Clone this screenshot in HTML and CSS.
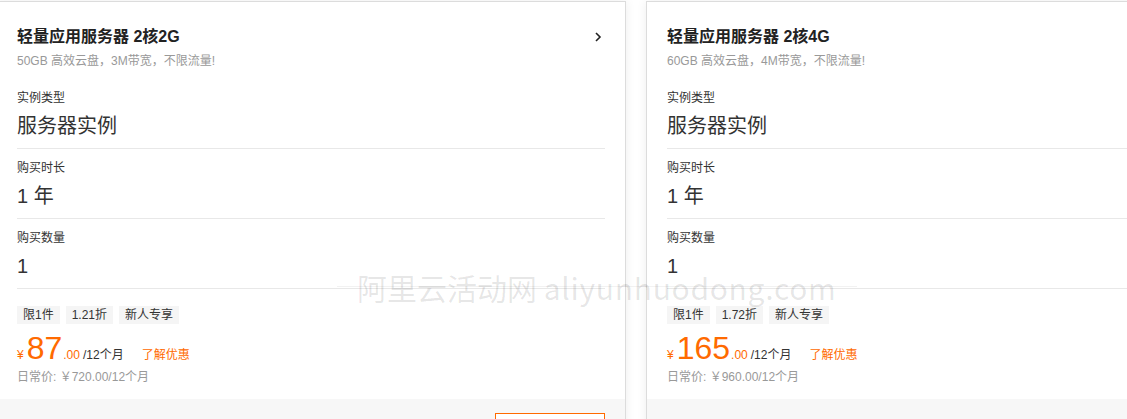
FILE: index.html
```html
<!DOCTYPE html>
<html lang="zh-CN">
<head>
  <meta charset="UTF-8">
  <title>轻量应用服务器</title>
  <link rel="stylesheet" href="styles.css">
</head>
<body>
  <div class="cards">
    <div class="card">
      <div class="card-body">
        <div class="card-head">
          <div class="title-row">
            <h3>轻量应用服务器 2核2G</h3>
            <svg class="chevron" width="8" height="12" viewBox="0 0 8 12"><path d="M2 2 L6 6 L2 10" fill="none" stroke="#222" stroke-width="1.6"/></svg>
          </div>
          <p class="sub">50GB 高效云盘，3M带宽，不限流量!</p>
        </div>
        <div class="field">
          <div class="label">实例类型</div>
          <div class="value">服务器实例</div>
        </div>
        <div class="field">
          <div class="label">购买时长</div>
          <div class="value">1 年</div>
        </div>
        <div class="field">
          <div class="label">购买数量</div>
          <div class="value">1</div>
        </div>
        <div class="tags">
          <span class="tag">限1件</span>
          <span class="tag">1.21折</span>
          <span class="tag">新人专享</span>
        </div>
        <div class="price-row">
          <span class="yen">¥</span>
          <span class="amount">87</span>
          <span class="cents">.00</span>
          <span class="unit">/12个月</span>
          <a class="more" href="#">了解优惠</a>
        </div>
        <div class="orig">日常价: ￥720.00/12个月</div>
      </div>
      <div class="card-foot">
        <button class="buy"></button>
      </div>
    </div>

    <div class="card">
      <div class="card-body">
        <div class="card-head">
          <div class="title-row">
            <h3>轻量应用服务器 2核4G</h3>
            <svg class="chevron" width="8" height="12" viewBox="0 0 8 12"><path d="M2 2 L6 6 L2 10" fill="none" stroke="#222" stroke-width="1.6"/></svg>
          </div>
          <p class="sub">60GB 高效云盘，4M带宽，不限流量!</p>
        </div>
        <div class="field">
          <div class="label">实例类型</div>
          <div class="value">服务器实例</div>
        </div>
        <div class="field">
          <div class="label">购买时长</div>
          <div class="value">1 年</div>
        </div>
        <div class="field">
          <div class="label">购买数量</div>
          <div class="value">1</div>
        </div>
        <div class="tags">
          <span class="tag">限1件</span>
          <span class="tag">1.72折</span>
          <span class="tag">新人专享</span>
        </div>
        <div class="price-row">
          <span class="yen">¥</span>
          <span class="amount">165</span>
          <span class="cents">.00</span>
          <span class="unit">/12个月</span>
          <a class="more" href="#">了解优惠</a>
        </div>
        <div class="orig">日常价: ￥960.00/12个月</div>
      </div>
      <div class="card-foot">
        <button class="buy"></button>
      </div>
    </div>
  </div>

  <div class="watermark">阿里云活动网 <span class="wm-latin">aliyunhuodong.com</span></div>
</body>
</html>
```

FILE: styles.css
```css
* {
  box-sizing: border-box;
  margin: 0;
  padding: 0;
}
body {
  font-family: "Liberation Sans", "Noto Sans CJK SC", sans-serif;
  background-color: #fff;
  color: #333;
  width: 1127px;
  height: 419px;
  overflow: hidden;
  position: relative;
}
.cards {
  display: flex;
  gap: 20px;
  margin-top: 1px;
  margin-left: -4px;
}
.card {
  flex: 0 0 630px;
  border: 1px solid #dcdcdc;
  border-bottom: none;
  background: #fff;
  box-shadow: 0 0 10px rgba(0, 0, 0, 0.07);
}
.card-body {
  padding: 24px 20px 13px;
}
.title-row {
  display: flex;
  align-items: center;
  justify-content: space-between;
}
h3 {
  font-size: 16px;
  line-height: 22px;
  font-weight: bold;
  color: #222;
}
.chevron {
  margin-right: 3px;
}
.sub {
  margin-top: 4px;
  font-size: 12px;
  line-height: 18px;
  color: #999;
}
.card-head {
  padding-bottom: 9px;
}
.field {
  padding: 10px 0 8px;
  border-bottom: 1px solid #e8e8e8;
}
.label {
  font-size: 12px;
  line-height: 18px;
  color: #333;
}
.value {
  margin-top: 5px;
  font-size: 20px;
  line-height: 28px;
  color: #333;
}
.tags {
  display: flex;
  gap: 6px;
  margin-top: 17px;
}
.tag {
  background: #f5f5f5;
  padding: 0 6px;
  font-size: 12px;
  line-height: 18px;
  color: #333;
}
.price-row {
  display: flex;
  align-items: baseline;
  margin-top: 6px;
  height: 36px;
  color: #ff6a00;
}
.yen {
  font-size: 12px;
  margin-right: 3px;
}
.amount {
  font-size: 32px;
  line-height: 36px;
}
.cents {
  font-size: 12px;
  margin-left: 1px;
}
.unit {
  font-size: 12px;
  color: #333;
  margin-left: 3px;
}
.more {
  font-size: 12px;
  color: #ff6a00;
  text-decoration: none;
  margin-left: 18px;
}
.orig {
  margin-top: 2px;
  font-size: 12px;
  line-height: 18px;
  color: #999;
}
.card-foot {
  background: #f7f7f7;
  padding: 14px 20px 14px;
  display: flex;
  justify-content: flex-end;
}
.buy {
  width: 110px;
  height: 32px;
  border: 1px solid #ff6a00;
  background: #fff;
}
.watermark {
  position: absolute;
  left: 357px;
  top: 268px;
  font-family: "Noto Sans CJK SC", sans-serif;
  font-size: 30px;
  line-height: 38px;
  color: rgba(0, 0, 0, 0.1);
  white-space: nowrap;
  pointer-events: none;
}
.wm-latin {
  letter-spacing: 0.7px;
}
.watermark::after {
  content: "";
  position: absolute;
  left: -20px;
  right: -20px;
  top: 18px;
  border-top: 1px solid rgba(0, 0, 0, 0.05);
}
```
